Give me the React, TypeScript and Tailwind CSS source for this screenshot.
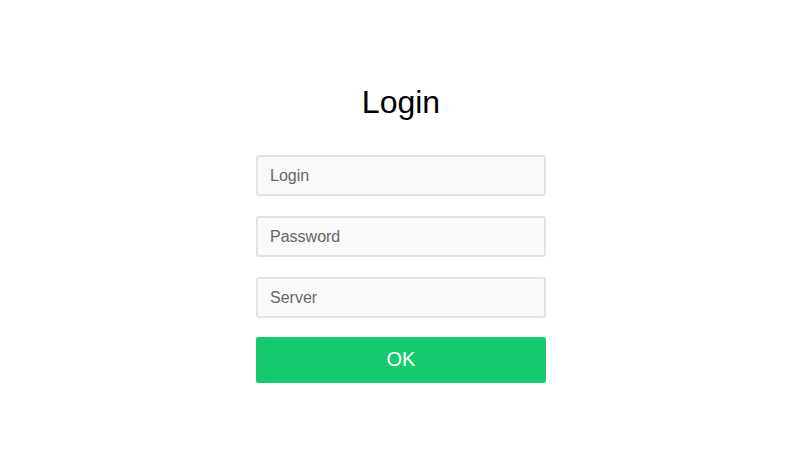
export default function App() {
  return (
    <div className="w-[800px] h-[472px] bg-white flex flex-col items-center pl-[2px]" style={{ fontFamily: '"Liberation Sans", Arial, sans-serif' }}>
      <h1 className="mt-[82px] text-[32px] leading-[40px] text-black">Login</h1>
      <div className="mt-[33px] w-[290px] flex flex-col gap-[20px]">
        {["Login", "Password", "Server"].map((p) => (
          <input
            key={p}
            placeholder={p}
            className="h-[41px] w-full rounded-[3px] border-2 border-[#e3e3e3] bg-[#fafafa] px-[12px] text-[16px] text-[#555] placeholder:text-[#666] outline-none"
          />
        ))}
        <button className="-mt-[1px] h-[46px] w-full rounded-[2px] bg-[#17c96f] text-white text-[20px] pb-[3px]">OK</button>
      </div>
    </div>
  );
}
